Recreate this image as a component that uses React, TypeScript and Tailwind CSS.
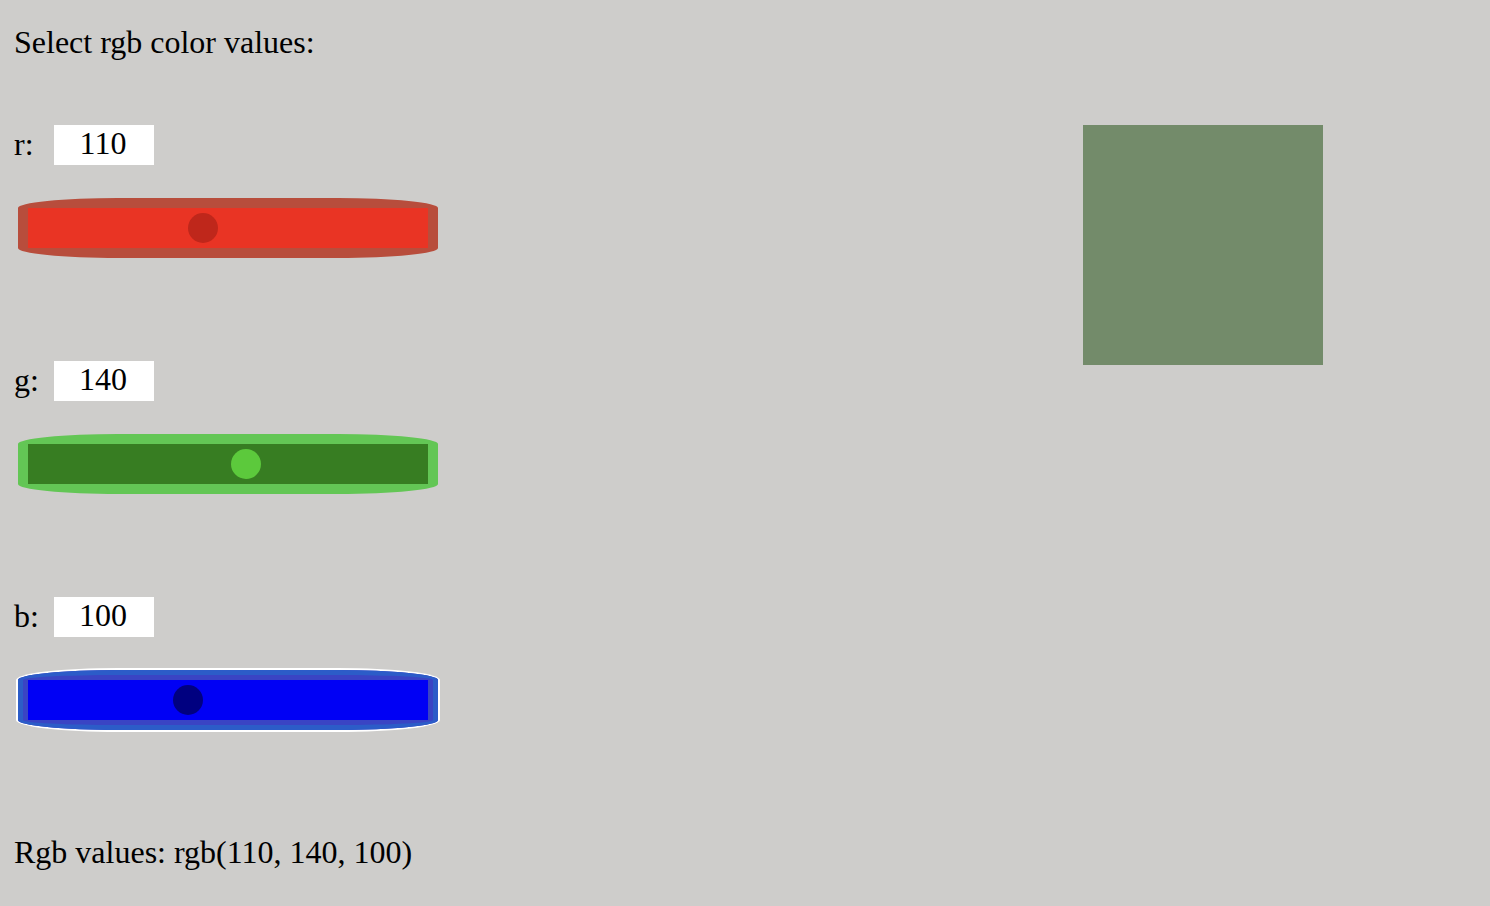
import React, { useState } from 'react'

const sliderBase =
  'block h-[60px] w-[420px] appearance-none border-[10px] border-solid rounded-[100px/10px] cursor-pointer [&::-webkit-slider-thumb]:appearance-none [&::-webkit-slider-thumb]:h-[30px] [&::-webkit-slider-thumb]:w-[30px] [&::-webkit-slider-thumb]:rounded-full'

const ColorRow = ({
  label,
  value,
  onChange,
  sliderClass,
}: {
  label: string
  value: number
  onChange: (v: number) => void
  sliderClass: string
}) => {
  return (
    <div className="flex flex-col">
      <div className="flex h-[40px] items-center">
        <span className="w-[40px] pb-[3px]">{label}:</span>
        <input
          type="text"
          value={value}
          onChange={(e) => onChange(Math.max(0, Math.min(255, Number(e.target.value) || 0)))}
          className="h-[40px] w-[100px] bg-white pr-[2px] pb-[3px] text-center text-[32px] leading-[36px] outline-none [font-family:'Liberation_Serif','Times_New_Roman',serif]"
        />
      </div>
      <input
        type="range"
        min={0}
        max={255}
        value={value}
        onChange={(e) => onChange(Number(e.target.value))}
        className={`mt-[33px] ml-[4px] ${sliderBase} ${sliderClass}`}
      />
    </div>
  )
}

export default function App() {
  const [r, setR] = useState(110)
  const [g, setG] = useState(140)
  const [b, setB] = useState(100)

  return (
    <div className="min-h-screen bg-[#cecdcb] pt-[24px] pl-[14px] text-[32px] leading-[36px] text-black [font-family:'Liberation_Serif','Times_New_Roman',serif]">
      <p>Select rgb color values:</p>

      <div className="mt-[65px] flex">
        <div className="flex w-[1069px] flex-col gap-[103px]">
          <ColorRow
            label="r"
            value={r}
            onChange={setR}
            sliderClass="bg-[#e93424] border-[#b84d3c] [&::-webkit-slider-thumb]:bg-[#bf271b]"
          />
          <ColorRow
            label="g"
            value={g}
            onChange={setG}
            sliderClass="bg-[#377d22] border-[#63c655] [&::-webkit-slider-thumb]:bg-[#5cc93c]"
          />
          <ColorRow
            label="b"
            value={b}
            onChange={setB}
            sliderClass="bg-[#0000f5] border-[#3a44c4] outline-[5px] outline-solid outline-[#2c5cc8] -outline-offset-[5px] shadow-[0_0_0_2px_#ffffff] [&::-webkit-slider-thumb]:bg-[#000080]"
          />
        </div>
        <div
          className="h-[240px] w-[240px] shrink-0"
          style={{ backgroundColor: `rgb(${r + 5}, ${g - 1}, ${b + 6})` }}
        />
      </div>

      <p className="mt-[104px] pb-[35px]">
        Rgb values: rgb({r}, {g}, {b})
      </p>
    </div>
  )
}
